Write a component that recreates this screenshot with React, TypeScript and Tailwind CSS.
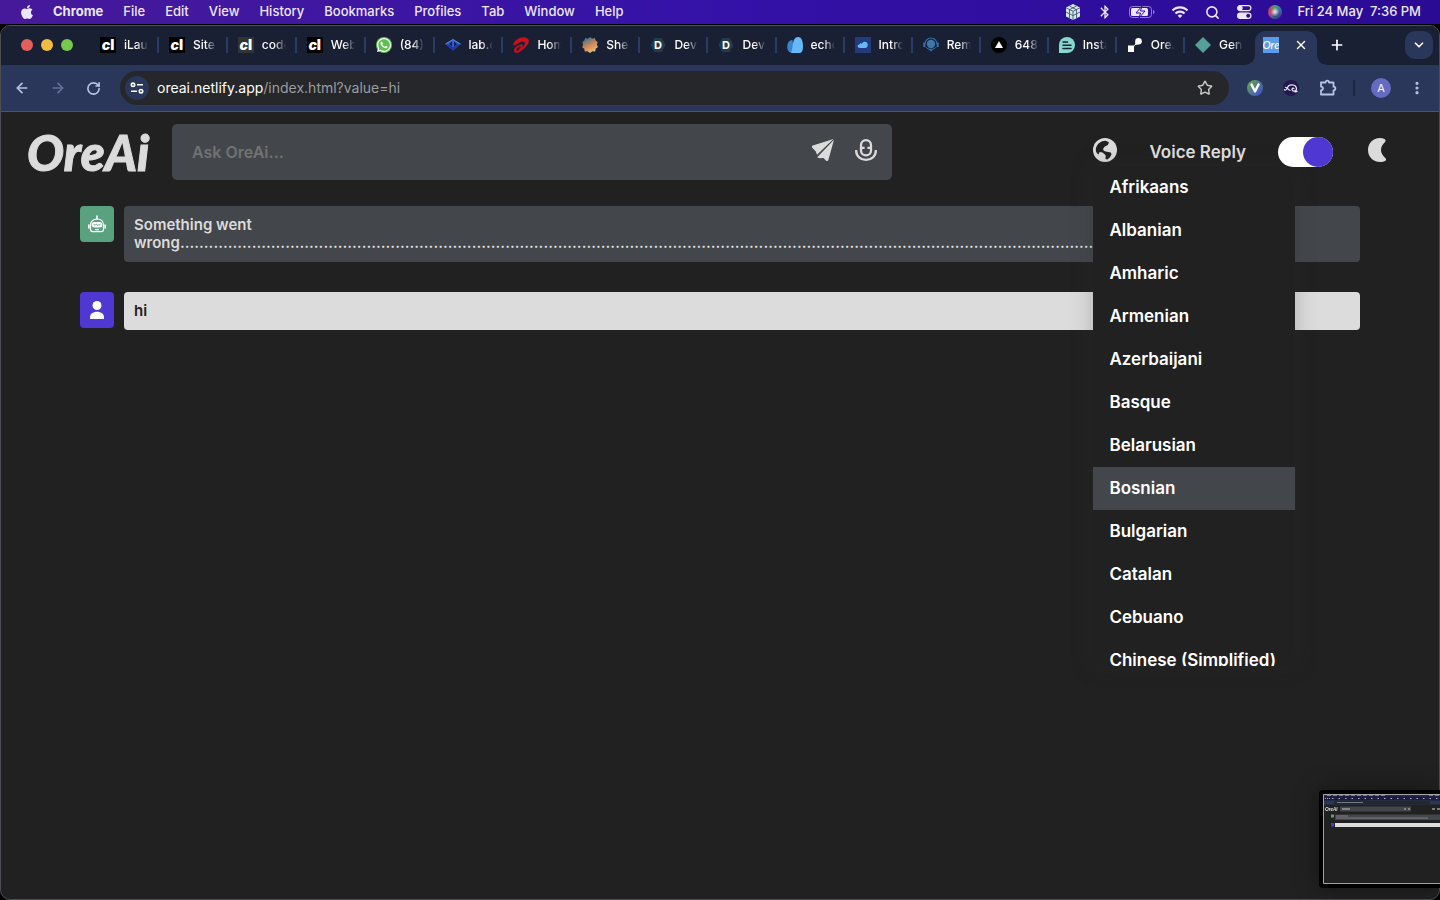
import React from "react";
import { MdBluetooth, MdWifi } from "react-icons/md";
import { FaApple, FaWhatsapp } from "react-icons/fa";
import {
  ArrowLeft,
  ArrowRight,
  RotateCw,
  Star,
  ChevronDown,
  Plus,
  X,
  EllipsisVertical,
  Search,
} from "lucide-react";

const menus = ["File", "Edit", "View", "History", "Bookmarks", "Profiles", "Tab", "Window", "Help"];

const languages = [
  "Afrikaans",
  "Albanian",
  "Amharic",
  "Armenian",
  "Azerbaijani",
  "Basque",
  "Belarusian",
  "Bosnian",
  "Bulgarian",
  "Catalan",
  "Cebuano",
  "Chinese (Simplified)",
];

const Codelab = ({ grey = false }: { grey?: boolean }) => (
  <span
    className={`flex size-4 items-center justify-center font-['Inter'] text-[14px] leading-none font-black text-white ${
      grey ? "bg-[#333333]" : "bg-black"
    }`}
  >
    <i>c</i>l
  </span>
);

const Dev = () => (
  <svg viewBox="0 0 16 16" className="size-4">
    <path d="M4.3 1h7.4L15.5 8l-3.8 7H4.3L.5 8z" fill="#233c4c" />
    <text x="8" y="12" textAnchor="middle" fontFamily="Inter, sans-serif" fontSize="11" fontWeight="700" fill="#fff">
      D
    </text>
  </svg>
);

const tabs: { title: string; icon: React.ReactNode }[] = [
  { title: "iLaun", icon: <Codelab /> },
  { title: "Site", icon: <Codelab /> },
  { title: "code", icon: <Codelab grey /> },
  { title: "Web", icon: <Codelab /> },
  {
    title: "(84)",
    icon: (
      <span className="flex size-4 items-center justify-center rounded-full bg-[#5dc04f] text-white">
        <FaWhatsapp className="size-4" />
      </span>
    ),
  },
  {
    title: "lab.c",
    icon: (
      <svg viewBox="0 0 16 16" className="size-4">
        <path d="M8 2.500L15.700 7 8 13.500.300 7z" fill="#2f5fd6" />
        <path d="M8 13.500L.300 7l4 .5L8 10.500l3.700-3 4-.5z" fill="#2238a8" />
        <path d="M7 4.500v5L4 7zM9 4.500v5L12 7z" fill="#192034" />
        <path d="M.5 7L8 2.500 15.500 7" fill="none" stroke="#4a90e6" />
      </svg>
    ),
  },
  {
    title: "Hom",
    icon: (
      <svg viewBox="0 0 16 16" className="size-4">
        <path
          d="M.3 7C2 3 7-.3 11.500.2c4.500.5 5.500 4.300 3 7.600-2.300 3.200-5.500 5.700-8.300 7.500C3.800 16.700.8 15.800 1 13.300c.3-2.800 4-5.300 7-5.800 2-.2 2.500 1 1.300 2.500C8 11.600 6 13 5 13.300c2-1.800 3-3.300 2.600-3.900-.6-.5-3.800 1.600-4.200 3.500-.2 1.200.8 1.200 2 .5 2.800-1.700 6-4.600 6.600-6.700.4-1.800-2-2.500-4.800-1.500C5 6 3 7.900 1.500 8.300.5 8.400 0 7.800.3 7z"
          fill="#cb0f1b"
        />
      </svg>
    ),
  },
  {
    title: "She",
    icon: (
      <svg viewBox="0 0 16 16" className="size-4">
        <defs>
          <linearGradient id="badge" x1=".2" y1="0" x2=".7" y2="1">
            <stop offset=".15" stopColor="#51788a" />
            <stop offset=".5" stopColor="#c98558" />
            <stop offset="1" stopColor="#eec27a" />
          </linearGradient>
        </defs>
        <path
          d="M8 0l2 1.800 2.800-.8.9 2.600 2 1.400-.8 2.600 1 2.600-2.200 1.500-.5 2.700-2.700-.1L8 16l-2.500-1.700-2.700.1-.5-2.700L.1 10.200l1-2.600L.3 5l2-1.400L3.200 1l2.800.8z"
          fill="url(#badge)"
        />
      </svg>
    ),
  },
  { title: "Dev", icon: <Dev /> },
  { title: "Dev", icon: <Dev /> },
  {
    title: "echo",
    icon: (
      <svg viewBox="0 0 16 16" className="size-4">
        <path d="M5.500 3C2 3 .3 6 .3 9.500.3 13 1.500 15.500 4 15.500h3z" fill="#3c83cf" />
        <path d="M4 15.500C6.500 12 4.500 0 11 0c4 0 5 5 5 9.500 0 4-1 6.500-3.500 6.500H5.500c-.8 0-1.300-.1-1.500-.5z" fill="#66b8f6" />
      </svg>
    ),
  },
  {
    title: "Intro",
    icon: (
      <svg viewBox="0 0 16 16" className="size-4">
        <path d="M0 0h16v16H0z" fill="#213b7c" />
        <path d="M5 11c-3 0-3-3.500-.5-3.500.2-1.500 2-1.700 2.500-.7 1-3 5.800-2.600 5.800 1.200 0 2-1.300 3-3 3z" fill="#69b7f4" />
      </svg>
    ),
  },
  {
    title: "Rem",
    icon: (
      <svg viewBox="0 0 16 16" className="size-4">
        <path d="M2 7a6 6 0 0112 0" fill="none" stroke="#336c9e" strokeWidth="1.200" />
        <circle cx="8" cy="7" r="4.200" fill="#3f77a8" />
        <path d="M.3 5.500h2v4.500h-2zM13.700 5.500h2v4.500h-2zM5.500 12.200h5L8 14.500z" fill="#3a73a6" />
        <path d="M2.500 9.800C4 11.800 6 12.300 8 12.300s4-.5 5.500-2.500" fill="none" stroke="#336c9e" />
      </svg>
    ),
  },
  {
    title: "648",
    icon: (
      <svg viewBox="0 0 16 16" className="size-4">
        <circle cx="8" cy="8" r="8" fill="#000" />
        <path d="M8 4l4 7H4z" fill="#fff" />
      </svg>
    ),
  },
  {
    title: "Insta",
    icon: (
      <svg viewBox="0 0 16 16" className="size-4">
        <path d="M0 8a8 8 0 118 8H0z" fill="#86d9cd" />
        <path d="M4 5h4.500M4 8.300h8M4 11.600h8" stroke="#192034" strokeWidth="1.500" strokeLinecap="round" />
      </svg>
    ),
  },
  {
    title: "Ore.",
    icon: (
      <svg viewBox="0 0 16 16" className="size-4">
        <path d="M1 8.500h5c2.500 0 2-2.500 3-4l3 2.500c-2 1-5 .5-5 3.500V15H1z" fill="#fff" />
        <circle cx="11.500" cy="4.200" r="3.300" fill="#fff" />
      </svg>
    ),
  },
  {
    title: "Gen",
    icon: (
      <svg viewBox="0 0 16 16" className="size-4">
        <path d="M8 0l8 8-8 8-8-8z" fill="#569f98" />
      </svg>
    ),
  },
];

function MenuBar() {
  return (
    <nav className="flex h-6 items-center bg-linear-to-r from-[#46199a] via-[#3411a8] to-[#2a0b93] pr-[19px] pl-[19px] text-[13px] font-medium text-[#ece6fa]">
      <FaApple className="size-4" />
      <button className="ml-[18px] font-bold">Chrome</button>
      <div className="ml-5 flex gap-5">
        {menus.map((m) => (
          <button key={m}>{m}</button>
        ))}
      </div>
      <div className="ml-auto flex items-center gap-4">
        <svg viewBox="0 0 16 16" className="size-4" aria-hidden="true">
          <path d="M8 0l7 3.500v9L8 16l-7-3.500v-9z" fill="#d4e9ec" />
          <path
            d="M1 3.800L8 7.300l7-3.500M8 7.300V16M4.500 2l7 3.700v8.500M11.500 2l-7 3.700v8.500M1 8l7 3.600L15 8"
            stroke="#46536e"
            strokeWidth=".9"
            fill="none"
          />
        </svg>
        <MdBluetooth className="size-4" />
        <svg viewBox="0 0 26 12" className="h-3 w-[26px]" aria-hidden="true">
          <rect x=".5" y=".5" width="22" height="11" rx="3" fill="none" stroke="currentColor" opacity=".5" />
          <rect x="2" y="2" width="17" height="8" rx="1.500" fill="currentColor" />
          <path d="M13 0L7 7h4.500L10 12l6-7h-4.500z" fill="currentColor" stroke="#2f0fa0" />
          <path d="M24 4v4c2-.6 2-3.400 0-4z" fill="currentColor" opacity=".5" />
        </svg>
        <MdWifi className="size-[18px]" />
        <Search className="size-[15px]" strokeWidth={2.500} />
        <svg viewBox="0 0 16 16" className="size-4" aria-hidden="true">
          <rect x="1.600" y="1.600" width="13.300" height="5" rx="2.500" fill="none" stroke="currentColor" strokeWidth="1.200" />
          <circle cx="4.200" cy="4.100" r="2.500" fill="currentColor" />
          <rect x="1" y="8.500" width="14.500" height="6.500" rx="3.200" fill="currentColor" />
          <circle cx="12.200" cy="11.700" r="2" fill="#2b0c97" />
        </svg>
        <span className="size-[14px] rounded-full bg-[radial-gradient(circle,#f3e9f4_0%,transparent_45%),conic-gradient(#4ca36b,#3a76ad,#3e4a86,#2c5b8a,#a94a86,#c2475a,#4ca36b)]" />
        <time className="whitespace-pre">Fri 24 May  7:36 PM</time>
      </div>
    </nav>
  );
}

function TabStrip() {
  return (
    <div className="flex h-[39px] items-end bg-[#192034] pr-[6px] pl-5 text-xs font-medium text-white">
      <div className="mb-[14px] flex w-[71px] shrink-0 gap-2">
        <button aria-label="Close" className="size-3 rounded-full bg-[#e2605a]" />
        <button aria-label="Minimise" className="size-3 rounded-full bg-[#f0bc42]" />
        <button aria-label="Zoom" className="size-3 rounded-full bg-[#75c94c]" />
      </div>
      <div className="flex min-w-0 flex-1">
        {tabs.map((t, i) => (
          <button
            key={i}
            className={`flex h-10 min-w-0 items-center pr-[2px] pl-2 ${i < 7 ? "flex-[69]" : "flex-[68]"}`}
          >
            <span className="size-4 shrink-0">{t.icon}</span>
            <span className="ml-2 w-6 shrink-0 overflow-hidden [mask-image:linear-gradient(to_right,black_50%,transparent)] text-left whitespace-nowrap">
              {t.title}
            </span>
            {i < tabs.length - 1 && <span className="ml-auto h-4 w-[2px] bg-[#293b66]" />}
          </button>
        ))}
      </div>
      <div className="relative flex h-[34px] w-[62px] shrink-0 items-center justify-between rounded-t-[10px] bg-[#2a375a] pr-[9px] pb-[6px] pl-2">
        <span className="flex size-4 items-center justify-center overflow-hidden bg-[#5a9bec] font-['Lato'] text-[11px] text-white italic">
          Ore
        </span>
        <button aria-label="Close tab">
          <X className="size-[14px]" strokeWidth={2.500} />
        </button>
        <svg viewBox="0 0 10 10" className="absolute bottom-0 -left-[10px] size-[10px]" aria-hidden="true">
          <path d="M10 0v10H0A10 10 0 0010 0z" fill="#2a375a" />
        </svg>
        <svg viewBox="0 0 10 10" className="absolute -right-[10px] bottom-0 size-[10px]" aria-hidden="true">
          <path d="M0 0v10h10A10 10 0 010 0z" fill="#2a375a" />
        </svg>
      </div>
      <button aria-label="New tab" className="mb-3 ml-[12px]">
        <Plus className="size-4" strokeWidth={2.500} />
      </button>
      <button
        aria-label="Search tabs"
        className="mb-[6px] ml-[60px] flex size-7 shrink-0 items-center justify-center rounded-[10px] bg-[#2a375a]"
      >
        <ChevronDown className="size-[14px]" strokeWidth={3} />
      </button>
    </div>
  );
}

function Toolbar() {
  return (
    <div className="flex h-[46px] shrink-0 items-center bg-[#2a375a] pr-[14px] pl-[13px] text-[#b4c3e6]">
      <button aria-label="Back">
        <ArrowLeft className="size-4" strokeWidth={2.500} />
      </button>
      <button aria-label="Forward" className="ml-5 text-[#63719a]">
        <ArrowRight className="size-4" strokeWidth={2.500} />
      </button>
      <button aria-label="Reload" className="ml-5">
        <RotateCw className="size-[15px]" strokeWidth={2.600} />
      </button>
      <div className="ml-[19px] flex h-[34px] flex-1 items-center rounded-full bg-[#25272a] pr-4 pl-[5px]">
        <button aria-label="Site information" className="flex size-6 items-center justify-center rounded-full bg-[#2a375a]">
          <svg viewBox="0 0 16 16" className="size-4 text-white" fill="none" stroke="currentColor" strokeWidth="1.600">
            <circle cx="4" cy="4.800" r="1.700" />
            <path d="M8 4.800h6M2 11.200h6" />
            <circle cx="12" cy="11.200" r="1.700" />
          </svg>
        </button>
        <p className="ml-2 flex-1 text-sm text-[#9b9c9e]">
          <span className="text-white">oreai.netlify.app</span>/index.html?value=hi
        </p>
        <button aria-label="Bookmark this page" className="text-[#c7c7c7]">
          <Star className="size-4" strokeWidth={2.200} />
        </button>
      </div>
      <div className="ml-[18px] flex items-center gap-5">
        <svg viewBox="0 0 16 16" className="size-4" aria-hidden="true">
          <defs>
            <linearGradient id="vue" x1="0" y1="0" x2="1" y2="1">
              <stop offset=".2" stopColor="#5f9b5c" />
              <stop offset=".8" stopColor="#4558c4" />
            </linearGradient>
          </defs>
          <circle cx="8" cy="8" r="8" fill="url(#vue)" />
          <path d="M4.500 4.500L8 11.500l3.500-7" fill="none" stroke="#fff" strokeWidth="2.400" strokeLinecap="round" strokeLinejoin="round" />
        </svg>
        <svg viewBox="0 0 16 16" className="size-4" aria-hidden="true">
          <circle cx="8" cy="8" r="8" fill="#221a4d" />
          <path
            d="M1 9.500c1.500 1.500 3-.5 3.500-2C6 3.500 13 4 13.500 8.500c.2 3-4 3.300-4.500 1-.3-1.500 2-1.800 2-.4M2 7.500c2-1.500 3 3 5.500 3M14.500 11c-1 1-2 1-3 .8"
            fill="none"
            stroke="#e6e3f3"
            strokeWidth="1.200"
          />
        </svg>
        <button aria-label="Extensions">
          <svg viewBox="0 0 18 18" className="size-[18px]" fill="none" stroke="currentColor" strokeWidth="1.800">
            <path d="M2 3.500h4.500c0-2.500 3.500-2.500 3.500 0h4.500v4.200c2.500 0 2.500 3.600 0 3.600v4.200H2v-4.200c2.600-.3 2.600-3.300 0-3.600z" strokeLinejoin="round" />
          </svg>
        </button>
      </div>
      <span className="ml-4 h-4 w-[2px] bg-[#1b2440]" />
      <button className="ml-4 size-5 rounded-full bg-[#646bc0] text-[11px] text-white">A</button>
      <button aria-label="More" className="ml-[18px]">
        <EllipsisVertical className="size-4" strokeWidth={2.800} />
      </button>
    </div>
  );
}

function GlobeIcon() {
  return (
    <svg viewBox="0 0 24 24" className="size-6">
      <circle cx="12" cy="12" r="12" fill="#dbdbdb" />
      <path
        d="M2.800 12C2.800 7 7 3 12.500 2.800L16 4.300 14.800 7 11.500 8.800 10 11l1 2 3 .8 3.800.6.700 2-1.700 3-2.600 2-1.700-.5.200-3.600L9.500 14.500 6.500 14 5.500 16.500C3.500 15 2.800 13.500 2.800 12z"
        fill="#212121"
      />
    </svg>
  );
}

function SendIcon() {
  return (
    <svg viewBox="0 0 22 22" className="size-[22px]" fill="currentColor">
      <path d="M0 6.800L21.500 0 5 15.800 3.800 12.500 0 8.500z" />
      <path d="M22 .8L16.300 21.200c-.3.900-1.500 1-2.200.5L11.500 19l-3 .2-3.500-.8z" />
    </svg>
  );
}

function MicIcon() {
  return (
    <svg viewBox="0 0 22 22" className="size-[22px]" fill="none" stroke="currentColor" strokeWidth="2.300">
      <rect x="6" y="1.200" width="10" height="15.200" rx="5" />
      <path d="M6 8.800h3.600M12.400 8.800H16" />
      <path d="M1.200 11v1c0 5 4.300 8.800 9.800 8.800s9.800-3.800 9.800-8.800v-1" />
    </svg>
  );
}

function Header() {
  return (
    <header className="flex items-center pt-3 pr-[53px] pl-[26px]">
      <a
        href="/"
        className="mr-[2px] w-[143px] shrink-0 font-['Lato'] text-[49px] leading-none font-black text-[#dbdbdb] italic [-webkit-text-stroke:1px_#dbdbdb]"
      >
        OreAi
      </a>
      <form className="flex h-14 w-[50vw] shrink-0 items-center rounded-[5px] bg-[#43464a] pr-[15px] pl-5 text-[#dbdbdb]">
        <input
          aria-label="Ask OreAi"
          placeholder="Ask OreAi..."
          className="min-w-0 flex-1 bg-transparent text-base font-semibold outline-none placeholder:text-[#727272]"
        />
        <button type="button" aria-label="Send" className="pb-1">
          <SendIcon />
        </button>
        <button type="button" aria-label="Speak" className="ml-[21px] pb-1">
          <MicIcon />
        </button>
      </form>
      <div className="ml-auto flex items-center text-[#dbdbdb]">
        <div className="relative pb-1">
          <button aria-label="Language" className="block">
            <GlobeIcon />
          </button>
          <ul className="absolute top-full left-0 z-10 h-[500px] w-[202px] overflow-hidden bg-[#212121] shadow-[0_0_20px_#33333340]">
            {languages.map((l) => (
              <li key={l}>
                <a
                  href="#"
                  className={`block h-[43px] px-4 text-[17px] leading-[43px] font-semibold whitespace-nowrap text-white ${
                    l === "Bosnian" ? "bg-[#43464a]" : ""
                  }`}
                >
                  {l}
                </a>
              </li>
            ))}
          </ul>
        </div>
        <label className="relative z-20 ml-8 flex items-center gap-8 text-[17px] leading-[30px] font-semibold">
          Voice Reply
          <input type="checkbox" defaultChecked className="peer sr-only" />
          <span className="flex h-[30px] w-[55px] justify-end rounded-full bg-white">
            <span className="size-[30px] rounded-full bg-[#4f38d2]" />
          </span>
        </label>
        <button aria-label="Dark mode" className="ml-[35px] pb-1">
          <svg viewBox="0 0 18 24" className="h-6 w-[18px]" fill="currentColor">
            <path d="M12 0C5 0 0 5.300 0 12s5 12 12 12c2 0 3.600-.3 5-1 1.300-.7 1.300-2 .3-3-2.500-2.300-4.300-5-4.300-8s1.500-5.500 3.800-7.700c1-1.100 1-2.500-.3-3.300C15.200.3 13.500 0 12 0z" />
          </svg>
        </button>
      </div>
    </header>
  );
}

function Chat() {
  return (
    <main className="mx-[79px] mt-[26px] flex flex-col gap-[30px] text-[15px] leading-[18px] font-semibold">
      <article className="flex items-start gap-[10px]">
        <span className="flex h-9 w-[34px] shrink-0 items-center justify-center rounded-[4px] bg-[#5aa17f] text-white">
          <svg viewBox="0 0 18 18" className="size-[18px]" fill="none" stroke="currentColor" strokeWidth="1.200">
            <path d="M9 1v3M.9 10v3M17.100 10v3" strokeLinecap="round" strokeWidth="1.600" />
            <path d="M2.500 14v-3.500C2.500 6.500 5 4 9 4s6.500 2.500 6.500 6.500V14c0 1.700-.8 2.700-2.200 2.700H4.700C3.300 16.700 2.500 15.700 2.500 14z" />
            <rect x="3.800" y="7" width="10.400" height="5.500" rx="2.500" fill="currentColor" stroke="none" />
            <path d="M5.500 9.800h2l1-.8 1 1.500 1-.7h2" stroke="#5aa17f" strokeWidth=".9" />
            <path d="M7 14.600h4" />
          </svg>
        </span>
        <p className="min-w-0 flex-1 rounded-[4px] bg-[#43464a] p-[10px] text-[#dbdbdb]">
          Something went {"wrong" + ".".repeat(220)}
        </p>
      </article>
      <article className="flex items-start gap-[10px]">
        <span className="flex h-9 w-[34px] shrink-0 items-center justify-center rounded-[4px] bg-[#4f38d2] text-white">
          <svg viewBox="0 0 14 18" className="h-[18px] w-[14px]" fill="currentColor">
            <circle cx="7" cy="4.500" r="4.500" />
            <path d="M0 18v-1.500C0 13 3 10.800 7 10.800s7 2.200 7 5.700V18z" />
          </svg>
        </span>
        <p className="min-w-0 flex-1 rounded-[4px] bg-[#dcdcdc] p-[10px] text-[#212121]">hi</p>
      </article>
    </main>
  );
}

function Preview() {
  return (
    <aside className="fixed right-0 bottom-3 rounded-l-[4px] bg-black py-1 pl-1 shadow-[0_0_24px_#00000060]">
      <svg viewBox="0 0 117 90" className="h-[90px] w-[117px]" role="img" aria-label="Screen capture preview">
        <path d="M0 0h117v90H0z" fill="#212121" />
        <path d="M0 0h117v2.500H0z" fill="#3812a8" />
        <path d="M0 2.500h117v4H0z" fill="#192034" />
        <path d="M0 6.500h117v4H0z" fill="#2a375a" />
        <path d="M11 7h96v3H11z" fill="#25272a" />
        <path d="M4 1.300h58M106 1.300h10" stroke="#b9a6ec" strokeWidth=".8" strokeDasharray="4 2" />
        <path d="M2 4.500h5" stroke="#d9a04a" strokeWidth="1" strokeDasharray="1 1" />
        <path d="M9 4.500h108" stroke="#a9b3c9" strokeWidth="1.200" strokeDasharray="1.500 5" />
        <path d="M14 8.500h26" stroke="#8c8f96" strokeWidth=".8" />
        <text x="2" y="17" fontSize="5" fontWeight="900" fontStyle="italic" fontFamily="Lato, sans-serif" fill="#dbdbdb">
          OreAi
        </text>
        <path d="M17 12.500h71v5H17z" fill="#43464a" />
        <path d="M19 15h8M81 15h2M85 15h2M109 15h3M114 15h3" stroke="#9b9b9b" strokeWidth="1.500" />
        <path d="M8 20.500h3v3H8z" fill="#5aa17f" />
        <path d="M12 20.500h105v5.500H12z" fill="#43464a" />
        <path d="M13 22h12M13 24h92" stroke="#8f9194" strokeWidth=".8" />
        <path d="M8 29h3v3.500H8z" fill="#4f38d2" />
        <path d="M12 29h105v4H12z" fill="#dcdcdc" />
        <path d="M117 .5H.5v89H117" fill="none" stroke="#a3a3a3" />
      </svg>
    </aside>
  );
}

export default function App() {
  return (
    <div className="flex min-h-screen flex-col overflow-hidden bg-black font-['Inter',sans-serif]">
      <MenuBar />
      <div className="mt-px flex flex-1 flex-col overflow-hidden rounded-[10px] border border-[#4c4e53] bg-[#212121]">
        <TabStrip />
        <Toolbar />
        <div className="flex-1 border-t border-[#46527a]">
          <Header />
          <Chat />
        </div>
      </div>
      <Preview />
    </div>
  );
}
